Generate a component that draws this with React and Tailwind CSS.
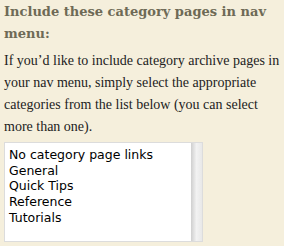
import React from 'react';

const categories = ['No category page links', 'General', 'Quick Tips', 'Reference', 'Tutorials'];

export default function App() {
    return (
        <div className="w-[284px] h-[246px] bg-[#f5efdc] px-[4px] pt-[1px] overflow-hidden">
            <h3 className="text-[13px] leading-[22px] font-bold text-[#6e6a56]" style={{ fontFamily: '"DejaVu Serif", Georgia, serif' }}>
                Include these category pages in nav menu:
            </h3>
            <p className="mt-[5px] text-[14px] leading-[22px] text-[#222]" style={{ fontFamily: '"Liberation Serif", Georgia, serif' }}>
                If you’d like to include category archive pages in your nav menu, simply select the appropriate categories from the list below (you can select more than one).
            </p>
            <div className="mt-[4px] w-[199px] h-[100px] flex bg-white border border-[#dcdcdc]">
                <ul className="flex-1 pl-[4px] pt-[4px] text-[12.5px] leading-[15.7px] text-black" style={{ fontFamily: '"DejaVu Sans", "Lucida Grande", sans-serif' }}>
                    {categories.map((c) => (
                        <li key={c}>{c}</li>
                    ))}
                </ul>
                <div className="w-[11px] bg-gradient-to-r from-[#cfcfcf] via-[#f2f2f2] to-[#e8e8e8]" />
            </div>
        </div>
    );
}
